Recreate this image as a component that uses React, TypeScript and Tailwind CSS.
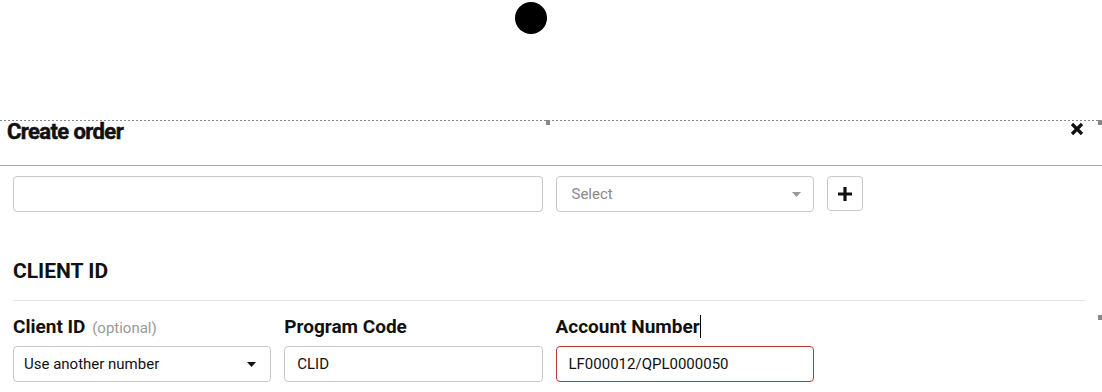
import React from 'react';

const font = { fontFamily: 'Roboto, "Liberation Sans", sans-serif' };

const Caret: React.FC<{ color: string }> = ({ color }) => (
  <svg width="9" height="5" viewBox="0 0 9 5">
    <path d="M0 0 L9 0 L4.5 5 Z" fill={color} />
  </svg>
);

const Handle: React.FC<{ className: string }> = ({ className }) => (
  <div className={`absolute w-[4px] h-[5px] bg-[#888] ${className}`}></div>
);

export default function App() {
  return (
    <div className="relative w-[1102px] h-[392px] bg-white overflow-hidden text-[#111]" style={font}>
      <div className="pt-[2px] pl-[515px] h-[120px]">
        <div className="w-[32px] h-[32px] rounded-full bg-black"></div>
      </div>

      <div className="h-px bg-[repeating-linear-gradient(to_right,#888_0_2px,transparent_2px_4px)]"></div>
      <Handle className="left-[546px] top-[120px]" />
      <Handle className="left-[1098px] top-[120px]" />
      <Handle className="left-[1098px] top-[315px]" />

      <div className="flex items-start justify-between pl-[7px] pr-[18px] h-[44px]">
        <h1 className="text-[22px] leading-none font-bold tracking-[-0.6px] mt-[0px] [-webkit-text-stroke:0.5px_#111]">Create order</h1>
        <button className="mt-[1px]">
          <svg width="14" height="14" viewBox="0 0 14 14">
            <path d="M2 2 L12 12 M12 2 L2 12" stroke="#111" strokeWidth="3.2" />
          </svg>
        </button>
      </div>
      <div className="h-px bg-[#aaa]"></div>

      <div className="pl-[13px] pr-[17px]">
        <div className="grid grid-cols-4 gap-x-[13px] mt-[10px]">
          <input className="col-span-2 h-[36px] border border-[#c8c8c8] rounded-[4px] px-3 text-[15px]" />
          <div className="h-[36px] border border-[#c8c8c8] rounded-[4px] flex items-center justify-between pl-[15px] pr-[12px] text-[15px] text-[#8a8a8a]">
            <span>Select</span>
            <Caret color="#999" />
          </div>
          <div>
            <button className="w-[36px] h-[35px] border border-[#c8c8c8] rounded-[4px] flex items-center justify-center">
              <svg width="16" height="16" viewBox="0 0 16 16">
                <path d="M8 1 V15 M1 8 H15" stroke="#111" strokeWidth="3.2" />
              </svg>
            </button>
          </div>
        </div>

        <h2 className="mt-[49px] text-[21px] leading-none font-bold">CLIENT ID</h2>
        <div className="mt-[18px] h-px bg-[#e3e3e3]"></div>

        <div className="grid grid-cols-4 gap-x-[13px] mt-[16px]">
          <label className="h-[18px] text-[19px] leading-none font-bold whitespace-nowrap">
            Client ID <span className="ml-[2px] text-[15px] font-normal text-[#999]">(optional)</span>
          </label>
          <label className="h-[18px] text-[19px] leading-none font-bold">Program Code</label>
          <label className="relative h-[18px] text-[19px] leading-none font-bold">
            Account Number
            <span className="absolute top-[-2px] w-px h-[23px] bg-black"></span>
          </label>
          <div></div>

          <div className="mt-[11px] h-[36px] border border-[#c8c8c8] rounded-[4px] flex items-center justify-between pl-[10px] pr-[14px] text-[15px] text-[#111]">
            <span>Use another number</span>
            <Caret color="#111" />
          </div>
          <div className="mt-[11px] h-[36px] border border-[#c8c8c8] rounded-[4px] flex items-center pl-[12px] text-[15px] text-[#111]">
            CLID
          </div>
          <div className="mt-[11px] h-[36px] border border-[#b03a3a] rounded-[4px] flex items-center pl-[12px] text-[15px] text-[#111]">
            LF000012/QPL0000050
          </div>
        </div>
      </div>
    </div>
  );
}
